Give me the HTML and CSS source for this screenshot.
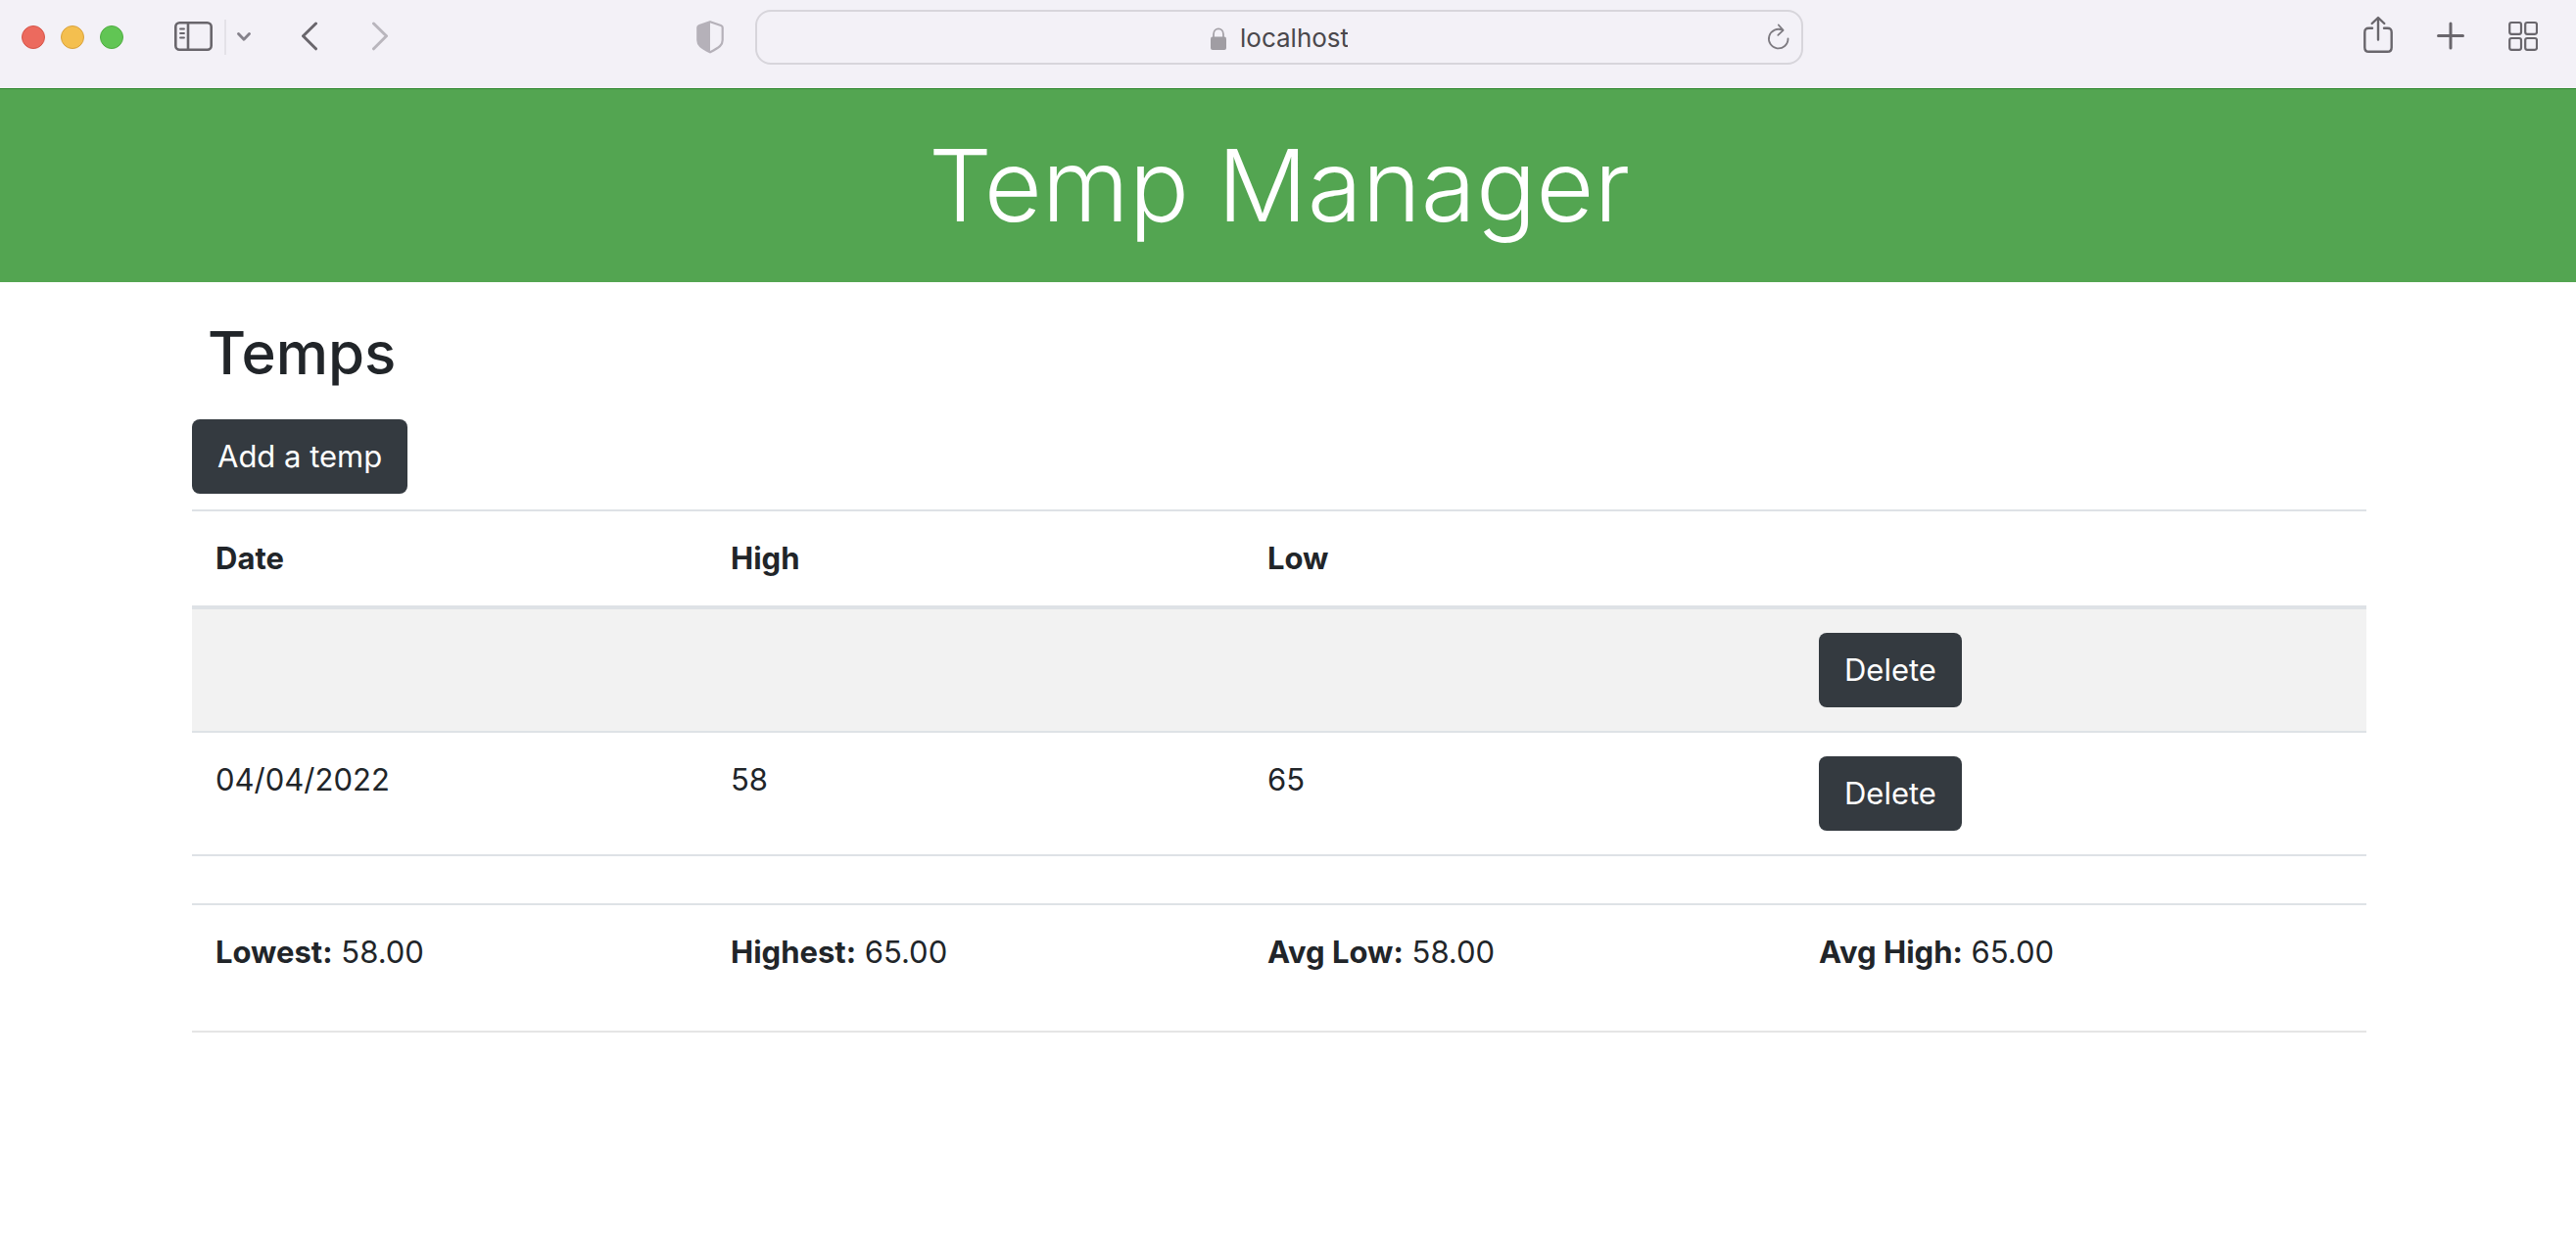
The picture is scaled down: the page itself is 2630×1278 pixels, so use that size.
FILE: index.html
```html
<!DOCTYPE html>
<html lang="en">
<head>
<meta charset="utf-8">
<title>Temp Manager</title>
<link rel="stylesheet" href="styles.css">
</head>
<body>
<div class="toolbar">
  <div class="tools tools-left">
    <div class="lights">
      <button class="light light-red" aria-label="Close"></button>
      <button class="light light-yellow" aria-label="Minimize"></button>
      <button class="light light-green" aria-label="Zoom"></button>
    </div>
    <div class="sidebar-group">
      <button class="tool" aria-label="Sidebar">
        <svg width="40" height="48" viewBox="0 0 40 48" fill="none" stroke="#69666c" stroke-width="2.6" stroke-linecap="round"><rect x="1.3" y="9.3" width="36.4" height="27.4" rx="4"/><path d="M14 9.5v27"/><path d="M6 15.5h4M6 20h4M6 24.500h4" stroke-width="1.8"/></svg>
      </button>
      <span class="divider"></span>
      <button class="tool" aria-label="Sidebar menu">
        <svg width="14" height="48" viewBox="0 0 14 48" fill="none" stroke="#85828b" stroke-width="2.800" stroke-linecap="round" stroke-linejoin="round"><path d="M1.500 20.500l5.500 5.800 5.500-5.800"/></svg>
      </button>
    </div>
    <div class="history">
      <button class="tool" aria-label="Back">
        <svg width="16" height="48" viewBox="0 0 16 48" fill="none" stroke="#69666c" stroke-width="3" stroke-linecap="round" stroke-linejoin="round"><path d="M14.500 10L1.500 22.800l13 13"/></svg>
      </button>
      <button class="tool" aria-label="Forward">
        <svg width="16" height="48" viewBox="0 0 16 48" fill="none" stroke="#b9b6bd" stroke-width="3" stroke-linecap="round" stroke-linejoin="round"><path d="M1.500 10l13 12.800-13 13"/></svg>
      </button>
    </div>
    <button class="tool shield" aria-label="Privacy report">
      <svg width="28" height="48" viewBox="0 0 28 48"><path d="M14 8.200L25 12c1 .4 1.700 1 1.700 2v13c0 5-3 7.300-12.700 12.300C4.300 34.300 1.300 32 1.300 27V14c0-1 .7-1.600 1.700-2z" fill="none" stroke="#b5b1b9" stroke-width="2.200" stroke-linejoin="round"/><path d="M14 8v31.500C4 34 1 32 1 27V14c0-1 1-1.600 2-2z" fill="#b5b1b9"/></svg>
    </button>
  </div>
  <div class="address">
    <div class="address-main">
      <svg width="16" height="48" viewBox="0 0 16 48"><path d="M3 25v-4c0-7.500 10-7.500 10 0v4" fill="none" stroke="#a5a2a8" stroke-width="1.800"/><rect y="23.500" width="16" height="13.500" rx="2" fill="#a09da3"/></svg>
      <input class="address-input" type="text" value="localhost" aria-label="Address">
    </div>
    <button class="tool reload" aria-label="Reload">
      <svg width="24" height="48" viewBox="0 0 24 48" fill="none" stroke="#7d7a80" stroke-width="1.800" stroke-linecap="round" stroke-linejoin="round"><path d="M21.500 25.500A9.800 9.800 0 1 1 16 16.800"/><path d="M11.800 11.500l4.800 5.300-5.300 5"/></svg>
    </button>
  </div>
  <div class="tools tools-right">
    <button class="tool" aria-label="Share">
      <svg width="30" height="48" viewBox="0 0 30 48" fill="none" stroke="#69666c" stroke-width="2.400" stroke-linecap="round" stroke-linejoin="round"><path d="M9 14.700H5.500C2.600 14.700 1.300 16 1.300 19v15.500c0 3 1.300 4.300 4.200 4.300h19c2.900 0 4.200-1.300 4.200-4.300V19c0-3-1.300-4.300-4.200-4.300H21"/><path d="M15 26.500V4.500M8.700 10L15 4l6.300 6"/></svg>
    </button>
    <button class="tool" aria-label="New tab">
      <svg width="28" height="48" viewBox="0 0 28 48" fill="none" stroke="#69666c" stroke-width="3" stroke-linecap="round"><path d="M1.500 22.500h25M14 10v25"/></svg>
    </button>
    <button class="tool" aria-label="Tab overview">
      <svg width="30" height="48" viewBox="0 0 30 48" fill="none" stroke="#69666c" stroke-width="2.200"><rect x="1.200" y="9" width="11.800" height="11.800" rx="2"/><rect x="17.200" y="9" width="11.800" height="11.800" rx="2"/><rect x="1.200" y="25" width="11.800" height="11.800" rx="2"/><rect x="17.200" y="25" width="11.800" height="11.800" rx="2"/></svg>
    </button>
  </div>
</div>
<header class="banner">
  <h1 class="banner-title">Temp Manager</h1>
</header>
<main class="page">
  <div class="container">
    <h2 class="section-title">Temps</h2>
    <button class="btn">Add a temp</button>
    <table class="temps">
      <colgroup><col class="col-date"><col class="col-high"><col class="col-low"><col></colgroup>
      <thead>
        <tr><th scope="col">Date</th><th scope="col">High</th><th scope="col">Low</th><td></td></tr>
      </thead>
      <tbody>
        <tr class="striped"><td></td><td></td><td></td><td><button class="btn">Delete</button></td></tr>
        <tr><td>04/04/2022</td><td>58</td><td>65</td><td><button class="btn">Delete</button></td></tr>
        <tr><td colspan="4"></td></tr>
        <tr><td><b>Lowest:</b> 58.00</td><td><b>Highest:</b> 65.00</td><td><b>Avg Low:</b> 58.00</td><td><b>Avg High:</b> 65.00</td></tr>
      </tbody>
    </table>
    <hr class="rule">
  </div>
</main>
</body>
</html>
```
FILE: styles.css
```css
* { box-sizing: border-box; }
body {
  margin: 0;
  background: #fff;
  color: #212529;
  font: 400 31px/48px Inter, "Liberation Sans", sans-serif;
}
button, input { font: inherit; }

/* Browser toolbar */
.toolbar {
  display: grid;
  grid-template-columns: 1fr 41% 1fr;
  align-items: center;
  height: 90px;
  padding: 0 18px 14px 0;
  background: #f3f1f7;
}
.tools, .lights, .sidebar-group, .history, .address-main { display: flex; align-items: center; }
.tools-left { padding: 0 32px 0 22px; gap: 52px; }
.tools-right { justify-content: flex-end; gap: 45px; padding-right: 21px; }
.lights { gap: 16px; }
.light { width: 24px; height: 24px; padding: 0; border: 1px solid; border-radius: 50%; }
.light-red { background: #ec6a5e; border-color: #d65549; }
.light-yellow { background: #f4bf4f; border-color: #d9a23c; }
.light-green { background: #61c554; border-color: #4fad41; }
.tool { display: block; padding: 0; border: 0; background: none; }
.tool svg, .address-main svg { display: block; }
.sidebar-group { gap: 11px; }
.divider { width: 2px; height: 36px; background: #e4e2e8; }
.history { gap: 56px; }
.shield { margin-left: auto; }
.address {
  display: grid;
  grid-template-columns: 1fr auto 1fr;
  align-items: center;
  height: 56px;
  padding: 0 11px;
  border: 2px solid #d7d5db;
  border-radius: 16px;
}
.address-main { grid-column: 2; gap: 14px; }
.address-input {
  width: 110px;
  height: 36px;
  padding: 2px 0 0;
  border: 0;
  outline: 0;
  background: none;
  color: #4a484c;
  font-size: 26px;
}
.reload { justify-self: end; }

/* Page */
.banner {
  padding: 31px 18px 32px 0;
  border-top: 1px solid #2f8730;
  background: #53a551;
}
.banner-title {
  margin: 0;
  color: #fff;
  font-size: 102px;
  font-weight: 300;
  line-height: 134px;
  text-align: center;
}
.page { padding-right: 18px; }
.container { max-width: 2220px; margin: 0 auto; padding-top: 32px; }
.section-title { margin: 0 0 28px; padding: 0 16px; font-size: 60px; font-weight: 500; line-height: 80px; }
.btn {
  display: block;
  height: 76px;
  padding: 0 26px;
  border: 0;
  border-radius: 8px;
  background: #343a40;
  color: #fff;
  text-align: center;
  white-space: nowrap;
}
.temps { width: 100%; margin-top: 16px; border-spacing: 0; table-layout: fixed; }
.temps th, .temps td { padding: 24px; border-top: 2px solid #dee2e6; text-align: left; vertical-align: top; }
.temps thead th, .temps thead td { border-bottom: 4px solid #dee2e6; }
.temps .striped td { border-top: 0; background: #f2f2f2; }
.temps th, .temps b { font-weight: 700; }
.col-date { width: 526px; }
.col-high { width: 548px; }
.col-low { width: 563px; }
.rule { height: 2px; margin: 32px 0; border: 0; background: #e5e5e5; }
```
